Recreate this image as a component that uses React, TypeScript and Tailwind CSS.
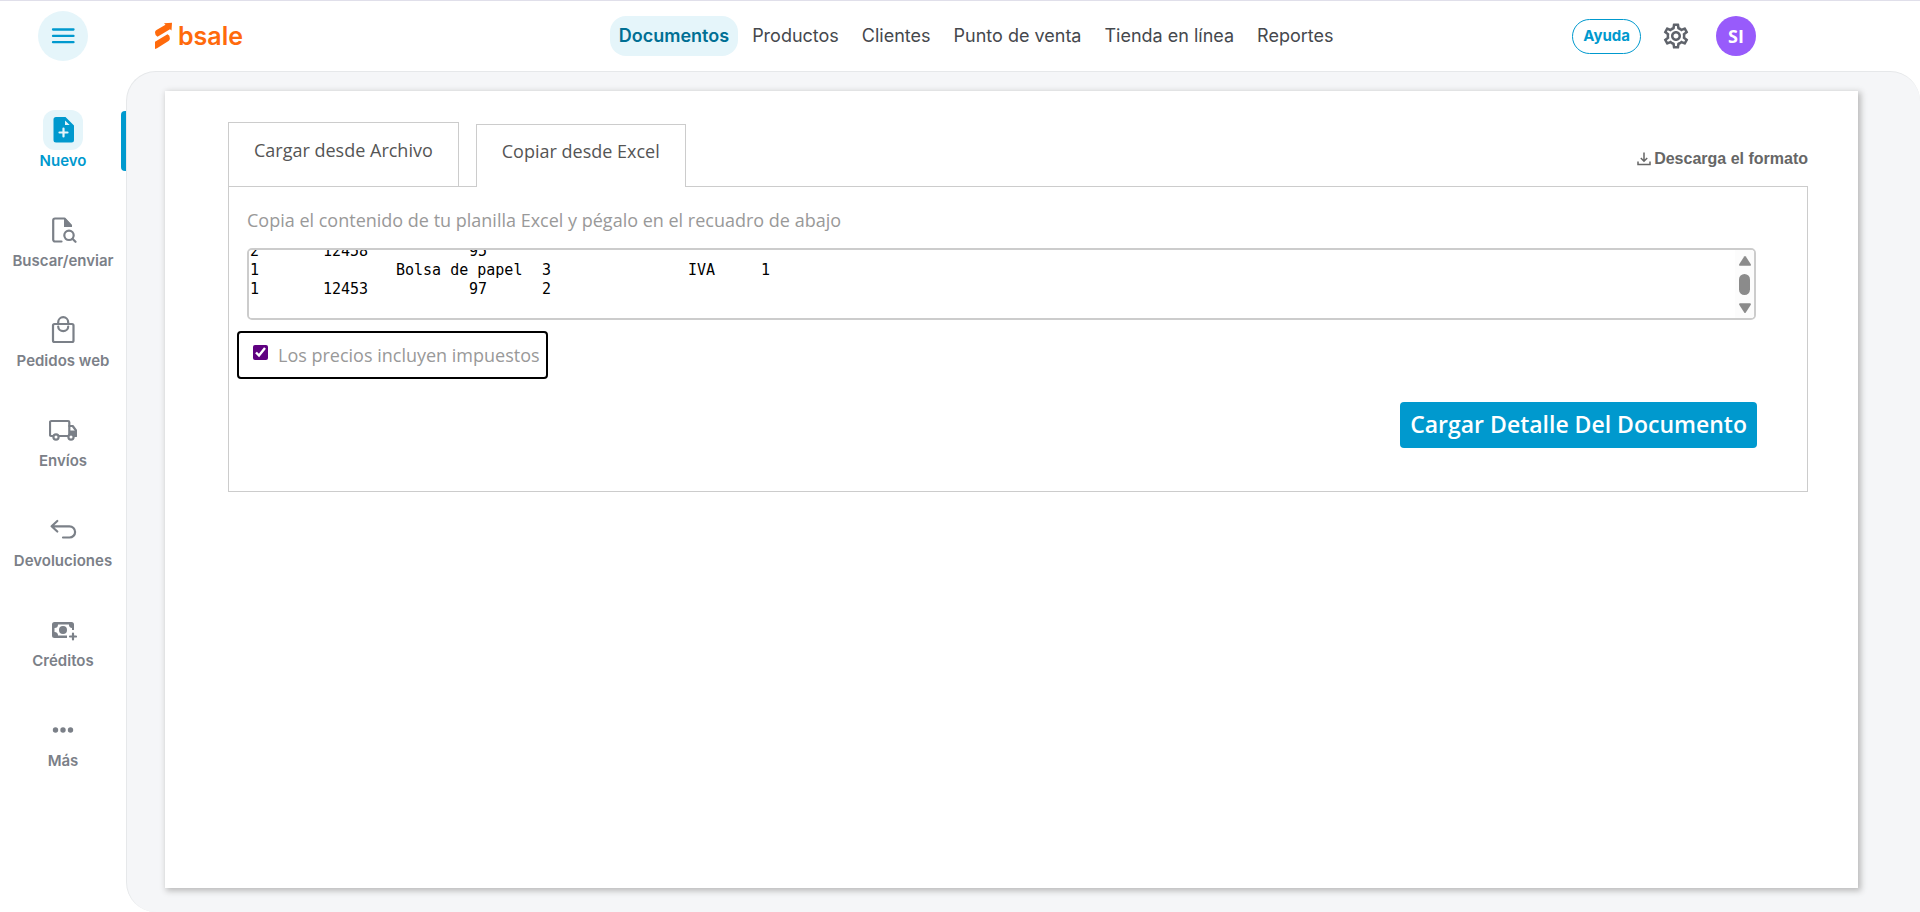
import { useEffect, useRef, useState } from "react";
import type { ReactNode } from "react";
import { MdOutlineSettings } from "react-icons/md";

type SideItem = {
  label: string;
  icon: ReactNode;
  active?: boolean;
};

const NAV = ["Documentos", "Productos", "Clientes", "Punto de venta", "Tienda en línea", "Reportes"];

const ROWS = "2\t12458\t\t95\n1\t\tBolsa de papel\t3\t\tIVA\t1\n1\t12453\t\t97\t2\n";

function Icon({ children }: { children: ReactNode }) {
  return (
    <svg viewBox="0 0 28 28" className="size-7" fill="none" stroke="currentColor" strokeWidth="2.200" strokeLinecap="round" strokeLinejoin="round" aria-hidden="true">
      {children}
    </svg>
  );
}

const SIDE: SideItem[] = [
  {
    label: "Nuevo",
    active: true,
    icon: (
      <Icon>
        <path d="M7 1h9.500L25 9.500V24a2.500 2.500 0 0 1-2.500 2.500H7A2.500 2.500 0 0 1 4.500 24V3.500A2.500 2.500 0 0 1 7 1z" fill="currentColor" stroke="none" />
        <path d="M16 4.500V9h4.700z" fill="#e5f5fa" stroke="none" />
        <path d="M14.500 12.500v8M10.500 16.500h8" stroke="#e5f5fa" />
      </Icon>
    ),
  },
  {
    label: "Buscar/enviar",
    icon: (
      <Icon>
        <path d="M12.500 25.500H6a1.800 1.800 0 0 1-1.800-1.800V4.300A1.800 1.800 0 0 1 6 2.500h9.500l6.500 7" />
        <path d="M15 2.500h1.500L23 9.500v1.500h-8z" fill="currentColor" stroke="none" />
        <circle cx="20" cy="19.300" r="4.700" />
        <path d="M23.500 22.800l3 3" />
      </Icon>
    ),
  },
  {
    label: "Pedidos web",
    icon: (
      <Icon>
        <rect x="4" y="8" width="20.500" height="18" rx="1.500" />
        <path d="M9.200 8V6.200a5 5 0 0 1 10 0V8M9.200 10.500a5 4.600 0 0 0 10 0" />
      </Icon>
    ),
  },
  {
    label: "Envíos",
    icon: (
      <Icon>
        <path d="M3.500 20H2.300A1.300 1.300 0 0 1 1 18.700V6.300A1.300 1.300 0 0 1 2.300 5H19a1.300 1.300 0 0 1 1.300 1.300V20H10.500" />
        <path d="M20.300 10h3.400l3.300 4.500V20h-1.500" />
        <path d="M20.500 14.500H27V20h-6.500z" fill="currentColor" stroke="none" />
        <circle cx="7" cy="21" r="2.600" fill="white" />
        <circle cx="22" cy="21" r="2.600" fill="white" />
      </Icon>
    ),
  },
  {
    label: "Devoluciones",
    icon: (
      <Icon>
        <path d="M8.300 5L2.600 10.300l5.700 5.200M3 10.300h17.500a5.600 5.600 0 0 1 0 11.200h-6.500" />
      </Icon>
    ),
  },
  {
    label: "Créditos",
    icon: (
      <Icon>
        <path d="M5.500 6h17A2.500 2.500 0 0 1 25 8.500V14h-2v-2a3 3 0 0 1-3-3.500H9A3.500 3.500 0 0 1 5.500 12v4A3.500 3.500 0 0 1 9 19.500h9V22H5.500A2.500 2.500 0 0 1 3 19.500v-11A2.500 2.500 0 0 1 5.500 6z" fill="currentColor" stroke="none" />
        <circle cx="14" cy="14" r="4" fill="currentColor" stroke="none" />
        <path d="M24 17.500v6M21 20.500h6" />
      </Icon>
    ),
  },
  {
    label: "Más",
    icon: (
      <Icon>
        <g fill="currentColor" stroke="none">
          <circle cx="6.500" cy="14" r="2.700" />
          <circle cx="14" cy="14" r="2.700" />
          <circle cx="21.500" cy="14" r="2.700" />
        </g>
      </Icon>
    ),
  },
];

function Logo() {
  return (
    <a href="#" className="flex items-center gap-1 font-['Inter',sans-serif] text-[25px] leading-7 font-semibold text-[#ff6a0c]">
      <svg viewBox="0 0 20 28" className="h-7 w-5" fill="currentColor" aria-hidden="true">
        <path d="M1 10.500q0-1.700 1.500-2.600L11.500 2.700 10 1.300 18 .8 17.500 8.500 16 7.200 3.500 14.700Q1 13.800 1 10.500z" />
        <path d="M1 19.800L13.500 12.300Q16 13.300 15.900 16.500 15.800 18.300 14.500 19L3 26.200 1 27z" />
      </svg>
      bsale
    </a>
  );
}

function Header() {
  return (
    <header className="flex h-[71px] shrink-0 items-center border-t border-[#e0dfea] font-['Inter',sans-serif]">
      <div className="flex w-[126px] shrink-0 justify-center">
        <button type="button" aria-label="Menú" className="flex size-[50px] items-center justify-center rounded-full bg-[#e5f5fa] text-[#0099ce]">
          <svg viewBox="0 0 24 16" className="h-4 w-6" stroke="currentColor" strokeWidth="2.300" strokeLinecap="round" aria-hidden="true">
            <path d="M2 1.500h20.500M2 7.900h20.500M2 14.200h20.500" />
          </svg>
        </button>
      </div>
      <div className="flex flex-1 items-center justify-between pr-[164px] pl-7">
        <Logo />
        <nav className="ml-[137px] flex items-center gap-[5px] text-lg">
          {NAV.map((item, i) => (
            <a
              key={item}
              href="#"
              className={i === 0 ? "rounded-2xl bg-[#e5f5fa] px-[9px] py-[6px] font-semibold text-[#006f94]" : "px-[9px] py-[6px] text-[#45484d]"}
            >
              {item}
            </a>
          ))}
        </nav>
        <div className="flex items-center">
          <button type="button" className="h-[35px] rounded-full border border-[#0099ce] px-[10px] text-[15px] font-bold text-[#0099ce]">
            Ayuda
          </button>
          <button type="button" aria-label="Configuración" className="ml-5 text-[#5f636b]">
            <MdOutlineSettings className="size-[30px]" />
          </button>
          <button type="button" className="ml-[25px] size-10 rounded-full bg-[#985bfb] font-['Open_Sans',sans-serif] text-lg font-bold text-white">
            SI
          </button>
        </div>
      </div>
    </header>
  );
}

function Sidebar() {
  return (
    <aside className="w-[126px] shrink-0 pt-[39px] font-['Inter',sans-serif]">
      <ul className="grid gap-[38px]">
        {SIDE.map((item) => (
          <li key={item.label} className={item.active ? "relative text-[#0099ce]" : "text-[#7b8088]"}>
            <a href="#" className="flex flex-col items-center text-[15px] leading-[22px] font-semibold">
              <span className={item.active ? "flex size-10 items-center justify-center rounded-xl bg-[#e5f5fa]" : "flex size-10 items-center justify-center"}>
                {item.icon}
              </span>
              {item.label}
            </a>
            {item.active ? <span className="absolute inset-y-px right-0 w-[5px] rounded-l bg-[#0099ce]" /> : null}
          </li>
        ))}
      </ul>
    </aside>
  );
}

function PasteBox() {
  const [text, setText] = useState(ROWS);
  const ref = useRef<HTMLTextAreaElement>(null);

  useEffect(() => {
    if (ref.current) ref.current.scrollTop = ref.current.scrollHeight;
  }, []);

  return (
    <div className="relative mt-[15px]">
      <textarea
        id="planilla"
        ref={ref}
        value={text}
        onChange={(e) => setText(e.target.value)}
        spellCheck={false}
        className="block h-[72px] w-full resize-none rounded-[5px] border-2 border-[#ccc] bg-white pl-px font-['DejaVu_Sans_Mono',monospace] text-[15px] leading-[19px] text-black outline-none [scrollbar-width:none] [tab-size:73px]"
      />
      <div className="pointer-events-none absolute top-[2px] right-[2px] bottom-[2px] flex w-[19px] flex-col items-center rounded-r-sm bg-[#fcfcfc] pt-[6px] text-[#8b8b8b]">
        <svg viewBox="0 0 12 10" className="h-[10px] w-3" fill="currentColor" aria-hidden="true">
          <path d="M5.200.6q.8-1 1.600 0L11.800 8.300Q12.300 9.800 10.800 9.800H1.200Q-.3 9.800.2 8.300z" />
        </svg>
        <span className="my-2 h-[21px] w-[11px] rounded-full bg-[#8b8b8b]" />
        <svg viewBox="0 0 12 10" className="h-[10px] w-3" fill="currentColor" aria-hidden="true">
          <path d="M5.200 9.400q.8 1 1.600 0L11.800 1.700Q12.300.2 10.800.2H1.200Q-.3.2.2 1.700z" />
        </svg>
      </div>
    </div>
  );
}

export default function App() {
  const [included, setIncluded] = useState(true);

  return (
    <div className="flex min-h-screen flex-col bg-white">
      <Header />
      <div className="flex flex-1">
        <Sidebar />
        <main className="flex min-w-0 flex-1 rounded-l-[30px] rounded-tr-[30px] border-t border-l border-[#e6e8ea] bg-[#f5f6f8] pt-[19px] pr-[62px] pb-6 pl-[38px] font-['Open_Sans',sans-serif]">
          <div className="min-w-0 flex-1 bg-white pt-[31px] pr-[50px] pl-[63px] shadow-[2px_2px_6px_1px_#bbb]">
            <div className="flex items-end justify-between">
              <div role="tablist" className="-mb-px flex items-end gap-[17px] text-lg font-medium text-[#555]">
                <button type="button" role="tab" aria-selected="false" className="h-[65px] border border-[#ccc] px-[25px] pb-[10px]">
                  Cargar desde Archivo
                </button>
                <button type="button" role="tab" aria-selected="true" className="relative h-[63px] border border-b-0 border-[#ccc] bg-white px-[25px] pb-[10px]">
                  Copiar desde Excel
                </button>
              </div>
              <a href="#" className="mb-[15px] flex items-center gap-[3px] font-['Liberation_Sans',sans-serif] text-base font-bold text-[#666]">
                <svg viewBox="0 0 14 14" className="size-[14px]" fill="none" stroke="currentColor" strokeWidth="1.500" aria-hidden="true">
                  <path d="M7 .5v8.500M3.800 6L7 9.200 10.200 6M1 9.500v3h12v-3" />
                </svg>
                Descarga el formato
              </a>
            </div>
            <section className="border border-[#ccc] px-[18px] pt-5 pb-[43px] text-lg font-medium text-[#999]">
              <div className="pr-[33px]">
                <label htmlFor="planilla" className="block leading-[26px]">
                  Copia el contenido de tu planilla Excel y pégalo en el recuadro de abajo
                </label>
                <PasteBox />
              </div>
              <label className="-ml-[10px] mt-[11px] inline-flex h-12 items-center gap-[10px] rounded border-2 border-black pr-[6px] pl-[14px]">
                <input
                  type="checkbox"
                  checked={included}
                  onChange={(e) => setIncluded(e.target.checked)}
                  className="mb-[6px] size-[15px] accent-[#5f0080]"
                />
                Los precios incluyen impuestos
              </label>
              <div className="mt-[23px] flex justify-end pr-8">
                <button type="button" className="h-[46px] rounded bg-[#0099ce] px-[10px] text-[23px] font-semibold text-white">
                  Cargar Detalle Del Documento
                </button>
              </div>
            </section>
          </div>
        </main>
      </div>
    </div>
  );
}
